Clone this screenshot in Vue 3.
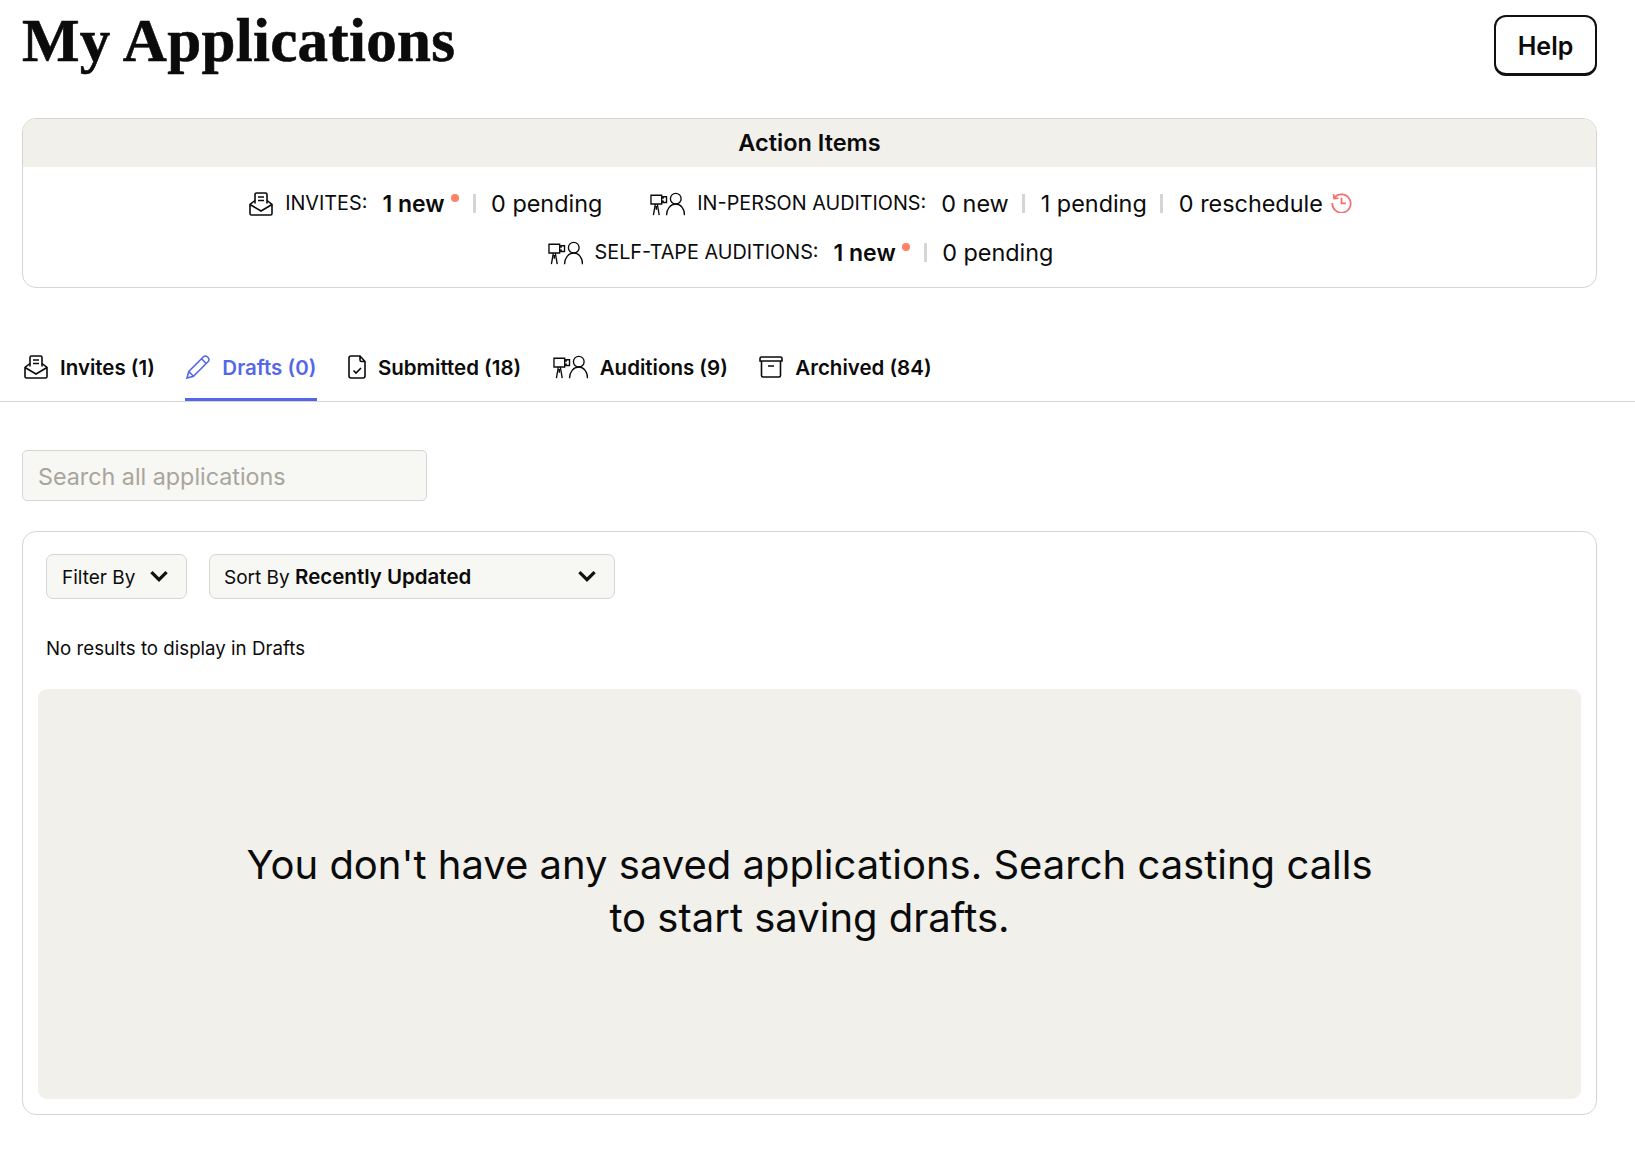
<script setup>
const tabs = [
  { label: 'Invites (1)', icon: 'invite', cls: 'icon' },
  { label: 'Drafts (0)', icon: 'pencil', cls: 'icon', active: true },
  { label: 'Submitted (18)', icon: 'file', cls: 'icon icon--file' },
  { label: 'Auditions (9)', icon: 'audition', cls: 'icon icon--wide' },
  { label: 'Archived (84)', icon: 'archive', cls: 'icon' }
];
</script>

<template>
  <div class="page">
    <svg class="sprite" aria-hidden="true">
      <symbol id="invite" viewBox="0 0 24 24">
        <path d="M6 11.5V2.5A1.5 1.5 0 0 1 7.500 1h9A1.500 1.500 0 0 1 18 2.500v9M9 5h6M9 8.500h6" />
        <path d="M6 8.500 1 12.500V21.500A1.500 1.500 0 0 0 2.500 23h19a1.500 1.500 0 0 0 1.500-1.500V12.500l-5-4M1 12.500l11 6.500 11-6.500" />
      </symbol>
      <symbol id="pencil" viewBox="0 0 24 24">
        <path d="M1 23l1.800-6.500L17.500 1.800a2.600 2.600 0 0 1 3.700 0l1 1a2.600 2.600 0 0 1 0 3.700L7.500 21.200 1 23zM2.800 16.500l4.700 4.700M15.500 3.800l4.700 4.700" />
      </symbol>
      <symbol id="file" viewBox="0 0 18 24">
        <path d="M12 1H3a2 2 0 0 0-2 2v18a2 2 0 0 0 2 2h12a2 2 0 0 0 2-2V6.500L12 1zM12 1v4a1.500 1.500 0 0 0 1.500 1.500H17M5.500 15.500l2.500 2.500 5-5" />
      </symbol>
      <symbol id="audition" viewBox="0 0 36 24">
        <path d="M1 3h11v9H1zM12 6h1.500V4.500H17v6h-3.500V9H12M5.500 12 3.500 23.500M7.500 12l2 11.500M6.500 14v4" />
        <circle cx="26.500" cy="6.500" r="5.500" />
        <path d="M17 23.500c0-6 4-11.500 9.500-11.500S35.500 17.500 35.500 23.500" />
      </symbol>
      <symbol id="archive" viewBox="0 0 24 24">
        <path d="M1 3.500A1.500 1.500 0 0 1 2.500 2h19A1.500 1.500 0 0 1 23 3.500V6H1zM2.500 6v14.500A1.500 1.500 0 0 0 4 22h16a1.500 1.500 0 0 0 1.500-1.500V6M9 11h6" />
      </symbol>
      <symbol id="clock" viewBox="0 0 24 24">
        <path d="M3.500 7A10.500 10.500 0 1 1 1.500 12.500M3 2.500 3.500 7.500l5-.5M12 6.500V13h5" />
      </symbol>
    </svg>

    <header class="top">
      <h1>My Applications</h1>
      <button class="help">Help</button>
    </header>

    <section class="actions">
      <h2>Action Items</h2>
      <div class="action-groups">
        <div class="group">
          <svg class="icon"><use href="#invite" /></svg>
          <span class="kind">INVITES:</span>
          <strong>1 new</strong><i class="dot"></i>
          <span class="sep"></span>
          <span>0 pending</span>
        </div>
        <div class="group">
          <svg class="icon icon--wide"><use href="#audition" /></svg>
          <span class="kind">IN-PERSON AUDITIONS:</span>
          <span>0 new</span>
          <span class="sep"></span>
          <span>1 pending</span>
          <span class="sep"></span>
          <span>0 reschedule</span>
          <svg class="icon icon--clock"><use href="#clock" /></svg>
        </div>
        <div class="group">
          <svg class="icon icon--wide"><use href="#audition" /></svg>
          <span class="kind">SELF-TAPE AUDITIONS:</span>
          <strong>1 new</strong><i class="dot"></i>
          <span class="sep"></span>
          <span>0 pending</span>
        </div>
      </div>
    </section>

    <nav class="tabs">
      <a v-for="tab in tabs" :key="tab.label" class="tab" :class="{ 'tab--active': tab.active }">
        <svg :class="tab.cls"><use :href="`#${tab.icon}`" /></svg>
        {{ tab.label }}
      </a>
    </nav>

    <input class="search" placeholder="Search all applications" />

    <section class="results">
      <div class="controls">
        <div class="select select--filter">
          <span>Filter By</span>
          <svg class="chevron" viewBox="0 0 18 12"><path d="M2 2l7 7 7-7" /></svg>
        </div>
        <div class="select select--sort">
          <span>Sort By <b>Recently Updated</b></span>
          <svg class="chevron" viewBox="0 0 18 12"><path d="M2 2l7 7 7-7" /></svg>
        </div>
      </div>
      <p class="count">No results to display in Drafts</p>
      <div class="empty">
        <p>You don't have any saved applications. Search casting calls to start saving drafts.</p>
      </div>
    </section>
  </div>
</template>

<style>
body {
  background: #fff;
}
</style>

<style scoped>
.page {
  padding: 15px 38px 51px 22px;
  font-family: Inter, "Liberation Sans", sans-serif;
  color: #0b0b0b;
}

.sprite {
  display: none;
}

.top {
  display: flex;
  justify-content: space-between;
  align-items: flex-start;
}

h1 {
  margin: 0;
  font-family: "Liberation Serif", serif;
  font-size: 61px;
  line-height: 52px;
  font-weight: 700;
  letter-spacing: 0.3px;
  -webkit-text-stroke: 0.6px #0b0b0b;
}

.help {
  width: 103px;
  height: 61px;
  padding-top: 2px;
  background: #fff;
  border: 2px solid #111;
  border-bottom-width: 3px;
  border-radius: 12px;
  font: 600 25px Inter, sans-serif;
  color: #0b0b0b;
}

.actions {
  margin-top: 42px;
  height: 168px;
  border: 1px solid #d5d5d1;
  border-radius: 14px;
  overflow: hidden;
}

h2 {
  margin: 0;
  height: 48px;
  background: #f1f0eb;
  font-size: 23.5px;
  font-weight: 600;
  line-height: 48px;
  text-align: center;
}

.action-groups {
  display: flex;
  flex-wrap: wrap;
  justify-content: center;
  column-gap: 30px;
  row-gap: 14px;
  max-width: 1200px;
  margin: 0 auto;
  padding-top: 19px;
  font-size: 23.4px;
}

.group {
  display: flex;
  align-items: center;
  height: 35px;
  margin-right: 18px;
}

.kind {
  font-size: 19.8px;
  margin: -2px 15px 0 12px;
}

.group strong {
  font-weight: 600;
  font-size: 23px;
}

.dot {
  width: 8px;
  height: 8px;
  margin: -12px 0 0 6px;
  border-radius: 50%;
  background: #ff8266;
}

.sep {
  width: 3px;
  height: 19px;
  margin: 0 15.500px 0 13.500px;
  background: #d5d5d1;
}

.dot + .sep {
  margin-left: 14px;
}

.icon {
  width: 24px;
  height: 24px;
  flex: none;
  fill: none;
  stroke: currentColor;
  stroke-width: 1.6;
}

.icon--wide {
  width: 35px;
  stroke-width: 1.4;
}

.icon--file {
  width: 18px;
}

.icon--clock {
  width: 21px;
  height: 21px;
  margin: -2px 0 0 8px;
  color: #f56f6f;
  stroke-width: 2;
}

.tabs {
  display: flex;
  gap: 29.500px;
  height: 83px;
  margin: 30px -38px 0 -22px;
  padding-left: 23px;
  border-bottom: 1px solid #d5d5d1;
  box-sizing: content-box;
}

.tab {
  display: flex;
  align-items: center;
  gap: 12px;
  height: 83px;
  padding: 15px 1px 0;
  box-sizing: border-box;
  font-size: 20.500px;
  font-weight: 600;
  white-space: nowrap;
}

.tab--active {
  color: #5468e7;
  box-shadow: inset 0 -3px 0 #5468e7;
}

.search {
  display: block;
  width: 405px;
  height: 51px;
  margin-top: 48px;
  padding: 2px 15px 0;
  box-sizing: border-box;
  background: #f7f7f3;
  border: 1px solid #d5d5d1;
  border-radius: 5px;
  font: 400 23.3px Inter, sans-serif;
}

.search::placeholder {
  color: #a8a59e;
}

.results {
  margin-top: 30px;
  padding: 22px 15px 15px;
  height: 584px;
  box-sizing: border-box;
  display: flex;
  flex-direction: column;
  border: 1px solid #d5d5d1;
  border-radius: 14px;
}

.controls {
  display: flex;
  gap: 22px;
  padding-left: 8px;
}

.select {
  display: flex;
  align-items: center;
  justify-content: space-between;
  height: 45px;
  padding: 0 17px 0 15px;
  box-sizing: border-box;
  background: #f7f7f3;
  border: 1px solid #d5d5d1;
  border-radius: 7px;
  font-size: 19px;
}

.select--filter {
  width: 141px;
  padding-top: 2px;
}

.select--filter .chevron {
  margin-top: -2px;
}

.select--sort {
  width: 406px;
  padding-left: 14px;
}

.select b {
  font-weight: 600;
  font-size: 20.500px;
}

.chevron {
  width: 20px;
  height: 13px;
  fill: none;
  stroke: #111;
  stroke-width: 3;
}

.count {
  margin: 0;
  padding: 38px 0 28px 8px;
  font-size: 18.7px;
  line-height: 24px;
}

.empty {
  flex: 1;
  display: flex;
  align-items: center;
  justify-content: center;
  background: #f1f0eb;
  border-radius: 9px;
}

.empty p {
  width: 1140px;
  margin: 0 0 6px;
  font-size: 40px;
  line-height: 53px;
  text-align: center;
}
</style>
